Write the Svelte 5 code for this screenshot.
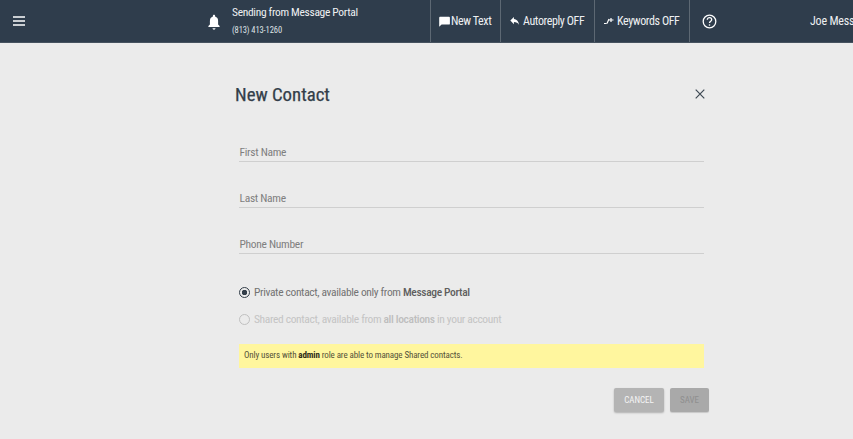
<script>
    const fields = ["First Name", "Last Name", "Phone Number"];
</script>

<div class="page">
    <header class="navbar">
        <button class="menu" aria-label="menu">
            <svg width="12" height="10" viewBox="0 0 12 10"><path d="M0 1h12M0 5h12M0 9h12" stroke="#fff" stroke-width="1.5" /></svg>
        </button>
        <svg class="bell" width="14" height="16" viewBox="0 0 14 16">
            <path d="M7 0.8c.7 0 1.1.5 1.1 1.2v.6c2 .6 3 2.2 3 4.3v3.6l1.5 1.6v.8H1.4v-.8l1.5-1.6V6.900c0-2.100 1-3.700 3-4.300V2c0-.7.400-1.200 1.100-1.200zM5.500 14.300h3c0 .9-.7 1.400-1.500 1.400s-1.500-.5-1.500-1.400z" fill="#fff" />
        </svg>
        <div class="sender">
            <div class="sender-name">Sending from Message Portal</div>
            <div class="sender-phone">(813) 413-1260</div>
        </div>
        <div class="nav-item new-text">
            <svg width="11" height="11" viewBox="0 0 11 11"><path d="M1 .8h9c.5 0 .9.4.9.9v6c0 .5-.4.9-.9.9H2.600L.2 10.800V1.700c0-.5.400-.9.800-.9z" fill="#fff" /></svg>
            New Text
        </div>
        <div class="nav-item autoreply">
            <svg width="10" height="9" viewBox="0 0 11 10"><path d="M4.300 2.200V0L.3 4l4 4V5.600c2.700 0 4.500.9 5.800 3.200C9.600 5.600 8 2.700 4.300 2.200z" fill="#fff" /></svg>
            Autoreply OFF
        </div>
        <div class="nav-item keywords">
            <svg width="10" height="8" viewBox="0 0 10 8"><path d="M0 6.500h2.500M3 6.500l2-4.500M5 3h4.500M7 1v4" stroke="#fff" stroke-width="1.200" fill="none" /></svg>
            Keywords OFF
        </div>
        <div class="nav-item help">
            <svg width="15" height="15" viewBox="0 0 15 15">
                <circle cx="7.500" cy="7.500" r="6.300" stroke="#fff" stroke-width="1.300" fill="none" />
                <path d="M5.300 5.800c0-1.300 1-2.100 2.200-2.100s2.200.8 2.200 2c0 1.500-2.200 1.500-2.200 3.300" stroke="#fff" stroke-width="1.300" fill="none" />
                <circle cx="7.500" cy="11" r=".8" fill="#fff" />
            </svg>
        </div>
        <div class="user">Joe Messina</div>
    </header>

    <main class="dialog">
        <div class="title-row">
            <h1>New Contact</h1>
            <button class="close" aria-label="close">
                <svg width="10" height="10" viewBox="0 0 10 10"><path d="M.7.7l8.600 8.600M9.300.7L.7 9.300" stroke="#3d4852" stroke-width="1.200" /></svg>
            </button>
        </div>

        <div class="form">
            {#each fields as f}
                <div class="field">{f}</div>
            {/each}

            <div class="options">
                <div class="radio-row">
                    <span class="radio checked"></span>
                    <span>Private contact, available only from <b>Message Portal</b></span>
                </div>
                <div class="radio-row disabled">
                    <span class="radio"></span>
                    <span>Shared contact, available from <b>all locations</b> in your account</span>
                </div>
            </div>

            <div class="notice">Only users with <b>admin</b> role are able to manage Shared contacts.</div>
        </div>

        <div class="actions">
            <button class="btn cancel">CANCEL</button>
            <button class="btn save">SAVE</button>
        </div>
    </main>
</div>

<style>
    :global(body) {
        margin: 0;
        background-color: #ebebeb;
    }
    .page {
        width: 853px;
        height: 439px;
        overflow: hidden;
        background-color: #ebebeb;
        font-family: Roboto, "Liberation Sans", sans-serif;
        font-stretch: 75%;
    }
    button {
        font-family: inherit;
        font-stretch: inherit;
        border: none;
        background: none;
        padding: 0;
    }
    .navbar {
        display: flex;
        align-items: center;
        height: 43px;
        box-sizing: border-box;
        background-color: #2f3d4c;
        border-bottom: 1px solid #46525f;
        color: #fff;
        white-space: nowrap;
    }
    .navbar > * {
        flex: none;
    }
    .nav-item svg {
        flex: none;
    }
    .menu {
        display: flex;
        margin-left: 13px;
    }
    .bell {
        margin-left: 182px;
        margin-top: 1px;
    }
    .sender {
        margin-left: 11px;
        width: 198px;
    }
    .sender-name {
        font-size: 11.500px;
        line-height: 14px;
        letter-spacing: -0.32px;
        margin-top: -1px;
        color: #eef0f2;
    }
    .sender-phone {
        font-size: 8.500px;
        line-height: 11px;
        letter-spacing: -0.1px;
        margin-top: 6px;
        color: #dfe3e6;
    }
    .nav-item {
        display: flex;
        align-items: center;
        height: 42px;
        box-sizing: border-box;
        border-left: 1px solid #5d6873;
        font-size: 12px;
        letter-spacing: -0.4px;
        color: #eef0f2;
    }
    .new-text {
        width: 70px;
        padding-left: 8px;
        gap: 1px;
    }
    .autoreply {
        width: 94px;
        padding-left: 9px;
        gap: 3px;
    }
    .keywords {
        width: 95px;
        padding-left: 9px;
        gap: 3px;
    }
    .help {
        width: 121px;
        padding-left: 12px;
    }
    .user {
        font-size: 12px;
        letter-spacing: -0.2px;
        color: #eef0f2;
    }
    .dialog {
        width: 474px;
        margin-left: 235px;
    }
    .title-row {
        display: flex;
        justify-content: space-between;
        align-items: center;
        height: 30px;
        margin-top: 36px;
        padding-right: 4px;
    }
    h1 {
        margin: 1px 0 0;
        font-size: 18.800px;
        font-weight: 400;
        -webkit-text-stroke: 0.25px #333e49;
        color: #333e49;
    }
    .close {
        display: flex;
    }
    .form {
        width: 465px;
        margin-left: 4px;
        margin-top: 32px;
    }
    .field {
        height: 21px;
        box-sizing: border-box;
        margin-bottom: 25px;
        padding-top: 4px;
        padding-left: 0.500px;
        border-bottom: 1px solid #cfcfcf;
        font-size: 11.500px;
        letter-spacing: -0.3px;
        line-height: 15px;
        color: #7f7f7f;
    }
    .options {
        margin-top: 30px;
    }
    .radio-row {
        display: flex;
        align-items: center;
        gap: 4px;
        height: 16px;
        margin-bottom: 11px;
        font-size: 11.500px;
        letter-spacing: -0.35px;
        color: #737373;
    }
    .radio-row b {
        font-weight: 500;
        color: #5f5f5f;
    }
    .disabled {
        color: #c4c4c4;
    }
    .disabled b {
        color: #bebebe;
    }
    .radio {
        width: 9px;
        height: 9px;
        border: 1px solid #c0c0c0;
        border-radius: 50%;
        flex: none;
    }
    .checked {
        border-color: #333e49;
        background: radial-gradient(circle, #333e49 0 2.500px, transparent 3px);
    }
    .notice {
        height: 24px;
        margin-top: 17px;
        padding-left: 5px;
        background-color: #fff69e;
        font-size: 9px;
        letter-spacing: -0.12px;
        line-height: 23px;
        color: #55523a;
    }
    .notice b {
        font-weight: 700;
        color: #2f2d18;
    }
    .actions {
        display: flex;
        justify-content: flex-end;
        gap: 6px;
        margin-top: 20px;
    }
    .btn {
        height: 24px;
        border-radius: 2px;
        font-size: 9px;
        font-weight: 400;
    }
    .cancel {
        width: 50px;
        background-color: #b4b4b4;
        color: #f4f4f4;
        box-shadow: 0 1px 2px rgba(0, 0, 0, 0.25);
    }
    .save {
        width: 39px;
        background-color: #a9a9a9;
        color: #8f8f8f;
        box-shadow: 0 1px 1px rgba(0, 0, 0, 0.15);
    }
</style>
